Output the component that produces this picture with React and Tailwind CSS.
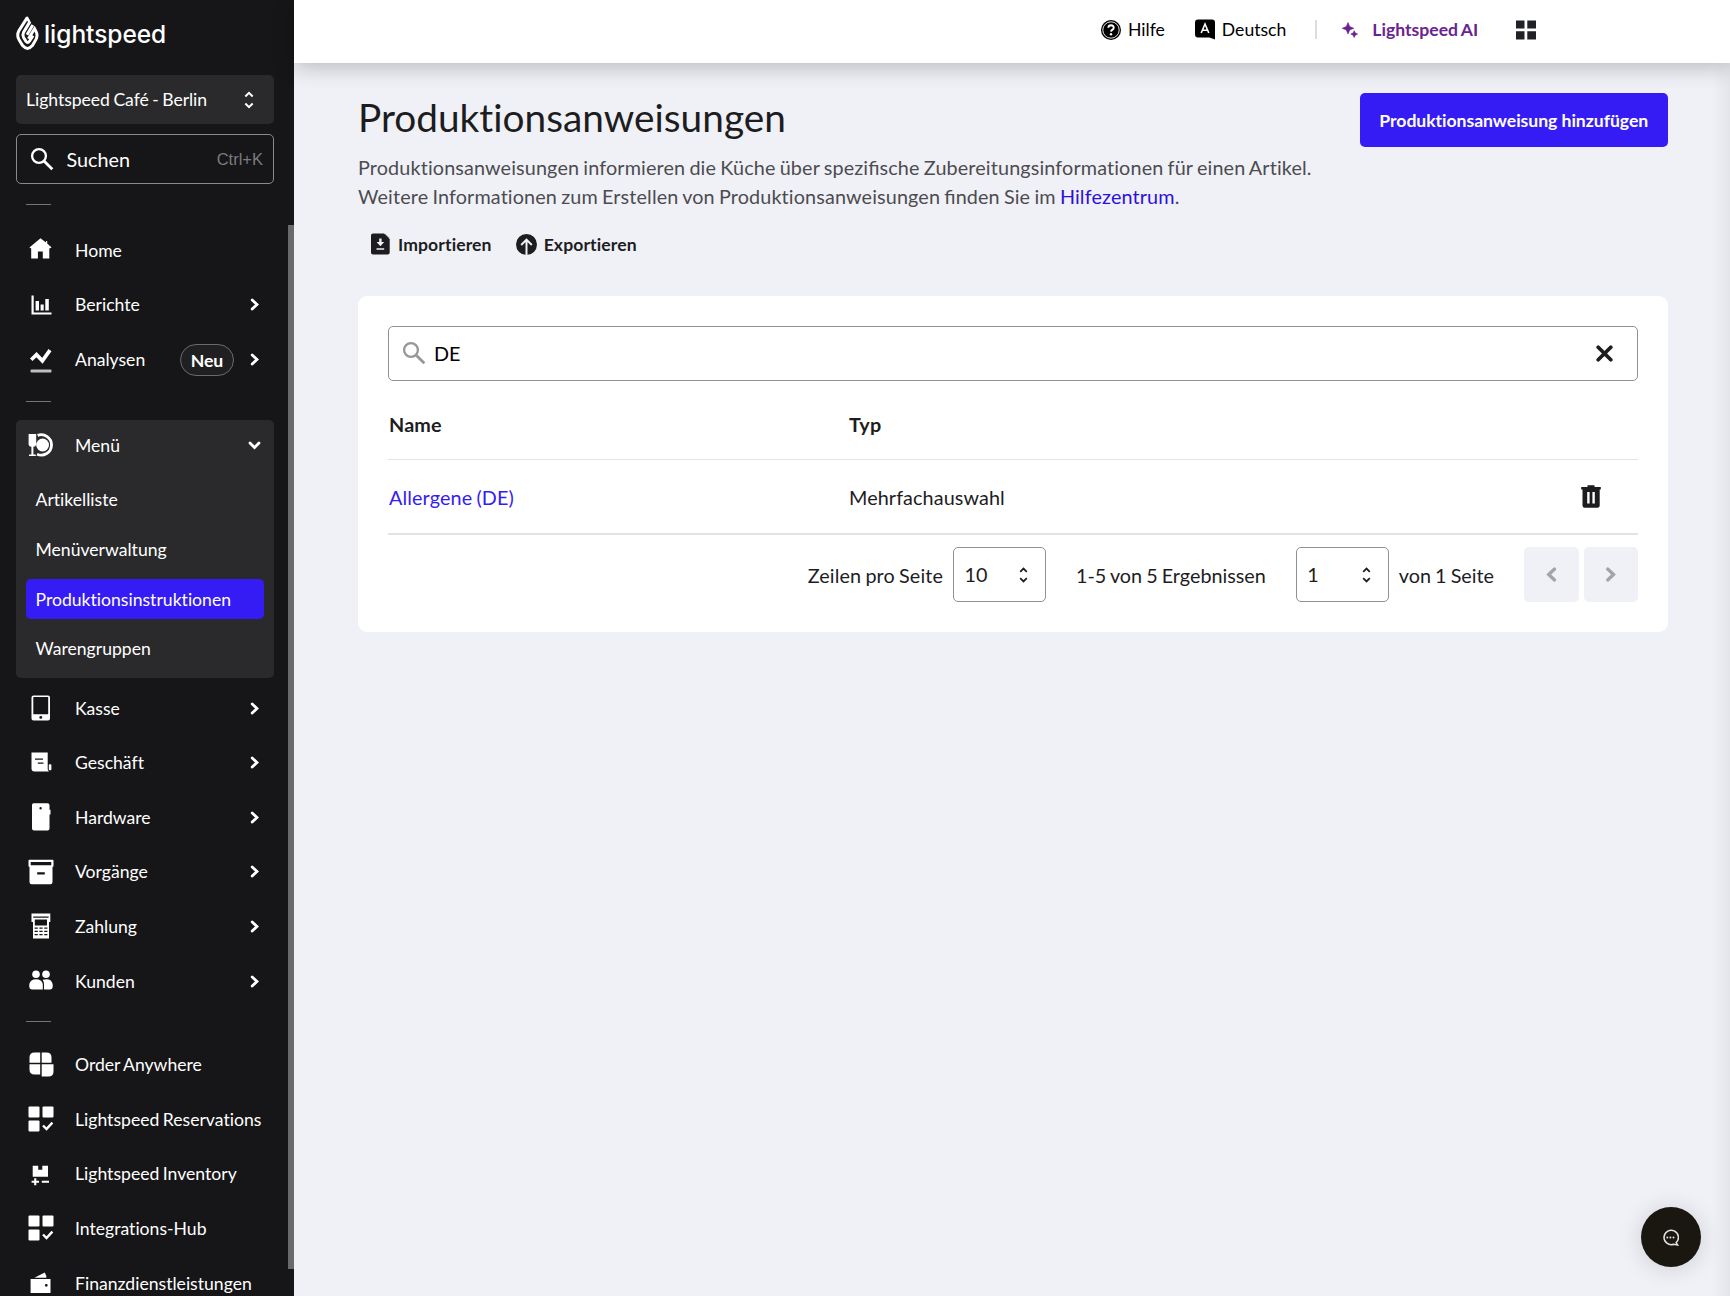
import React from "react";

function Icon({ w = 24, h = 24, box, className = "", children }) {
  return (
    <svg width={w} height={h} viewBox={box || `0 0 ${w} ${h}`} fill="currentColor" className={`block shrink-0 ${className}`}>
      {children}
    </svg>
  );
}

function Chevron({ dir = "right", className = "" }) {
  const paths = {
    right: "M2.2 2 L7 6.5 L2.2 11",
    left: "M7 2 L2.2 6.5 L7 11",
  };
  return (
    <Icon w={9} h={13} className={className}>
      <path d={paths[dir]} fill="none" stroke="currentColor" strokeWidth="2.8" strokeLinecap="round" strokeLinejoin="miter" />
    </Icon>
  );
}

function UpDown({ w = 9, h = 16 }) {
  return (
    <Icon w={w} h={h} box="0 0 9 16">
      <path d="M1.2 4.8 L4.5 1.6 L7.8 4.8 M1.2 11.2 L4.5 14.4 L7.8 11.2" fill="none" stroke="currentColor" strokeWidth="1.8" />
    </Icon>
  );
}

function SearchIcon({ className = "" }) {
  return (
    <Icon w={24} h={24} className={className}>
      <circle cx="9" cy="9" r="6.9" fill="none" stroke="currentColor" strokeWidth="2.3" />
      <path d="M14 14 L22.3 22.3" stroke="currentColor" strokeWidth="2.8" />
    </Icon>
  );
}

function AppsCheckIcon() {
  return (
    <Icon w={26} h={26}>
      <rect x="0.5" y="0.5" width="11" height="11" rx="1" />
      <rect x="14.5" y="0.5" width="11" height="11" rx="1" />
      <rect x="0.5" y="14.5" width="11" height="11" rx="1" />
      <path d="M15 19.5 L18.5 23 L24.4 16.6" fill="none" stroke="currentColor" strokeWidth="2.4" />
    </Icon>
  );
}

const icons = {
  home: (
    <Icon w={23} h={21} className="mb-[3px]">
      <path d="M11.5 0.3 L0.4 9.4 L2.2 10.4 V20.5 H8.9 V13.6 H13.8 V20.5 H20.3 V10.4 L22.6 9.4 L18.2 5.6 V3 H17 V4.5 Z" />
    </Icon>
  ),
  reports: (
    <Icon w={21} h={20} className="ml-[2px]">
      <path d="M0.5 0.5 H2.7 V17.5 H20.5 V19.6 H0.5 Z M4.6 6 H8 V15.5 H4.6 Z M9.6 9.5 H12.7 V15.5 H9.6 Z M14.3 4 H17.8 V15.5 H14.3 Z" />
    </Icon>
  ),
  analytics: (
    <Icon w={22} h={24} className="mt-[3px]">
      <path d="M1.2 10.8 L6.5 5.6 L12.4 11.8 L20 1.2" fill="none" stroke="currentColor" strokeWidth="3.7" />
      <rect x="0.5" y="20.6" width="21" height="3" rx="1" opacity="0.72" />
    </Icon>
  ),
  menu: (
    <Icon w={26} h={24}>
      <path d="M0.6 1 H8.2 V11 Q8.2 13.4 5.4 13.8 V21.5 H7.8 V23 H1 V21.5 H3.4 V13.8 Q0.6 13.4 0.6 11 Z" />
      <circle cx="14.6" cy="12" r="6.4" />
      <path d="M9.6 2.4 A10.2 10.2 0 1 1 9.1 21.2" fill="none" stroke="currentColor" strokeWidth="2.8" />
    </Icon>
  ),
  register: (
    <Icon w={20} h={26}>
      <path fillRule="evenodd" d="M2.5 0.5 H17 Q19 0.5 19 2.5 V23.5 Q19 25.5 17 25.5 H2.5 Q0.5 25.5 0.5 23.5 V2.5 Q0.5 0.5 2.5 0.5 Z M2.3 2 V19.3 H17.2 V2 Z M8.3 22.4 a1.5 1.3 0 1 0 3 0 a1.5 1.3 0 1 0 -3 0 Z" />
    </Icon>
  ),
  business: (
    <Icon w={21} h={20} className="mb-px ml-[2px]">
      <path fillRule="evenodd" d="M0.5 0.5 H16.7 V17 Q17 18.5 18 19.5 H3.5 Q0.5 19.5 0.5 16.5 Z M4 6.5 V7.8 H12 V6.5 Z M6.8 10.5 V11.8 H12.5 V10.5 Z" />
      <rect x="17.8" y="12.3" width="2.6" height="6" rx="0.8" />
    </Icon>
  ),
  hardware: (
    <Icon w={20} h={28}>
      <path fillRule="evenodd" d="M2.5 0.3 H16.5 Q18.5 0.3 18.5 2.3 V6.7 H19.5 V11.5 H18.5 V25.5 Q18.5 27.6 16.5 27.6 H3 Q1 27.6 1 25.6 V2 Q1 0.3 2.5 0.3 Z M8.4 5.3 a1.2 1.2 0 1 0 2.4 0 a1.2 1.2 0 1 0 -2.4 0 Z" />
    </Icon>
  ),
  operations: (
    <Icon w={26} h={26}>
      <path fillRule="evenodd" d="M1.5 0.7 H24.5 Q25.5 0.7 25.5 1.7 V6.5 Q25.5 8 24.5 8 V23 Q24.5 25.3 22.5 25.3 H3.5 Q1.5 25.3 1.5 23 V8 Q0.5 8 0.5 6.5 V1.7 Q0.5 0.7 1.5 0.7 Z M2.7 3 V6.3 H23.3 V3 Z M9.2 13.2 V15.5 H16.8 V13.2 Z" />
    </Icon>
  ),
  payment: (
    <Icon w={20} h={26}>
      <path fillRule="evenodd" d="M0.5 0.6 H19.3 V9 H18 V25.4 H2 V9 H0.5 Z M2.2 3.4 V4.7 H17.6 V3.4 Z M3.8 6.4 V12.4 H16 V6.4 Z" />
      <path d="M3.6 15.2 H16.4 M3.6 18.4 H16.4 M3.6 21.6 H16.4" stroke="#161618" strokeWidth="1.3" strokeDasharray="3.2 1.6" />
    </Icon>
  ),
  customers: (
    <Icon w={24} h={20} className="mb-[2px]">
      <circle cx="7" cy="4.2" r="3.8" />
      <circle cx="17" cy="4.2" r="3.8" />
      <path d="M0.3 17 V14 Q1.5 9.3 7 9.3 Q12.8 9.3 13.8 14 V19.5 H2.8 Q0.3 19.3 0.3 17 Z" />
      <path d="M13.6 9.8 Q22.5 7.5 23.7 14.5 V17 Q23.6 19.4 21.3 19.5 H15 V14 Q15 11.5 13.6 9.8 Z" />
    </Icon>
  ),
  order: (
    <Icon w={25} h={25} className="ml-px">
      <path d="M5.5 0.5 H11.2 V10.8 H0.5 V5.5 Q0.5 0.5 5.5 0.5 Z M12.7 0.5 H17.5 Q22.5 0.5 22.5 5.5 V10.8 H12.7 Z M0.5 12.3 H11.2 V22.5 H5.5 Q0.5 22.5 0.5 17.5 Z M12.7 12.3 H24.5 V19.5 Q24.5 24.5 19.5 24.5 H12.7 Z" />
    </Icon>
  ),
  apps: <AppsCheckIcon />,
  inventory: (
    <Icon w={19} h={21} className="mt-1">
      <path d="M1.7 0.7 H7.2 V4.7 H11.3 V0.7 H17 V11.8 H1.7 Z M3.2 13.2 H5.3 V15.7 H8 V17.8 H5.3 V20.3 H3.2 V17.8 H0.6 V15.7 H3.2 Z M10.8 15.7 H18 V17.8 H10.8 Z" />
    </Icon>
  ),
  wallet: (
    <Icon w={21} h={22}>
      <path fillRule="evenodd" d="M0.6 7 H20.5 V21 H0.6 Z M14.9 13.3 a1.4 1.4 0 1 0 2.8 0 a1.4 1.4 0 1 0 -2.8 0 Z" />
      <path d="M4.4 5.8 L14.8 0.5 L16.3 4 V5.8 Z" />
    </Icon>
  ),
};

const topItems = [
  { icon: "home", label: "Home" },
  { icon: "reports", label: "Berichte", arrow: true },
  { icon: "analytics", label: "Analysen", arrow: true, badge: "Neu" },
];

const subItems = ["Artikelliste", "Menüverwaltung", "Produktionsinstruktionen", "Warengruppen"];

const mainItems = [
  { icon: "register", label: "Kasse", arrow: true },
  { icon: "business", label: "Geschäft", arrow: true },
  { icon: "hardware", label: "Hardware", arrow: true },
  { icon: "operations", label: "Vorgänge", arrow: true },
  { icon: "payment", label: "Zahlung", arrow: true },
  { icon: "customers", label: "Kunden", arrow: true },
];

const extraItems = [
  { icon: "order", label: "Order Anywhere" },
  { icon: "apps", label: "Lightspeed Reservations" },
  { icon: "inventory", label: "Lightspeed Inventory" },
  { icon: "apps", label: "Integrations-Hub" },
  { icon: "wallet", label: "Finanzdienstleistungen" },
];

function NavItem({ icon, label, arrow, badge }) {
  return (
    <div className="flex h-[54.6px] shrink-0 items-center pl-[10.5px] pr-[15.5px]">
      <div className="flex w-[28px] shrink-0 justify-center">{icons[icon]}</div>
      <span className="ml-[20.5px] whitespace-nowrap pt-[1.5px]">{label}</span>
      <div className="ml-auto flex items-center gap-[15.5px]">
        {badge && (
          <span className="mt-[2px] flex h-[32px] w-[54px] items-center justify-center rounded-full border border-[#6a6a6c] bg-[#202022] pt-px font-bold">{badge}</span>
        )}
        {arrow && <Chevron />}
      </div>
    </div>
  );
}

function Divider({ className }) {
  return <div className={`ml-[10px] h-px w-[25px] shrink-0 bg-[#757577] ${className}`} />;
}

function Logo() {
  return (
    <div className="flex h-[35px] items-center">
      <svg width="23" height="35" viewBox="0 0 23 35" fill="none" stroke="white" strokeWidth="3">
        <path d="M11.4 1.4 L2.9 14.8 Q0.6 19.2 2.9 23.4 L6.6 29.6 Q11.5 35.2 16.4 29.6 L20 23.4 Q22 19.2 20 15.4 L18.6 12.8 L12.4 22.8" />
        <path d="M14 5.6 L7.6 16.2 Q6.3 19 7.6 21.6 L10 25.4 Q11.8 27.8 13.6 25 L17 19.6" />
        <path d="M16.8 9 L11 18.8" />
        <path d="M11.5 0 L14.6 5.5 L12.4 6.6 L10.6 4 Z" fill="white" stroke="none" />
      </svg>
      <span className="ml-[5px] pt-px font-['Inter',sans-serif] text-[24.5px] font-medium tracking-[-0.05px]">lightspeed</span>
    </div>
  );
}

function Sidebar() {
  return (
    <aside className="flex h-full w-[294px] shrink-0 bg-[#161618] text-[17.6px] text-white">
      <div className="flex w-[274px] flex-col overflow-hidden pl-4 pt-4">
        <Logo />
        <div className="mt-6 flex h-[49px] shrink-0 items-center justify-between rounded-[5px] bg-[#2a2a2c] pl-[10px] pr-[20px]">
          <span className="pt-[2px] tracking-[-0.04px]">Lightspeed Café - Berlin</span>
          <UpDown w={10} h={20} />
        </div>
        <div className="mt-[10px] flex h-[50px] shrink-0 items-center rounded-[5px] border border-[#8a8a8c] pl-[13px] pr-[10px]">
          <SearchIcon />
          <span className="ml-[12.5px] pt-px text-[19.8px]">Suchen</span>
          <span className="ml-auto font-['Liberation_Sans',sans-serif] text-[16.5px] text-[#7b7b7d]">Ctrl+K</span>
        </div>
        <Divider className="mt-5" />
        <div className="mt-[18px] flex flex-col">
          {topItems.map((item) => (
            <NavItem key={item.label} {...item} />
          ))}
        </div>
        <Divider className="mt-[14px]" />
        <div className="mt-[18px] flex h-[258px] shrink-0 flex-col rounded-[5px] bg-[#2a2a2c]">
          <div className="flex h-[51px] items-center pl-[10.5px] pr-[13.5px]">
            <div className="flex w-[28px] justify-center">{icons.menu}</div>
            <span className="ml-[20.5px] pt-px">Menü</span>
            <Icon w={13} h={9} className="ml-auto">
              <path d="M2 2 L6.5 6.6 L11 2" fill="none" stroke="currentColor" strokeWidth="2.8" strokeLinecap="round" />
            </Icon>
          </div>
          <div className="mt-[8.5px] flex flex-col gap-[9.8px] px-[10px]">
            {subItems.map((label) => (
              <div key={label} className={`flex h-10 items-center rounded-[5px] pl-[9.5px] pt-[2px] ${label === "Produktionsinstruktionen" ? "bg-[#351cf5]" : ""}`}>
                {label}
              </div>
            ))}
          </div>
        </div>
        <div className="mt-[3px] flex flex-col">
          {mainItems.map((item) => (
            <NavItem key={item.label} {...item} />
          ))}
        </div>
        <Divider className="mt-[12.5px]" />
        <div className="mt-[15.5px] flex flex-col">
          {extraItems.map((item) => (
            <NavItem key={item.label} {...item} />
          ))}
        </div>
      </div>
      <div className="ml-auto mt-[225px] h-[1044px] w-[6px] bg-[#6a6a6a]" />
    </aside>
  );
}

function Header() {
  return (
    <header className="relative z-10 flex h-[63px] shrink-0 items-center bg-white pb-[4px] pl-[807px] text-[17.6px] text-black shadow-[0_4px_22px_rgba(0,0,0,0.24)]">
      <Icon w={20} h={20}>
        <circle cx="10" cy="10" r="10" />
        <circle cx="10" cy="10" r="8.2" fill="none" stroke="white" strokeWidth="0.9" />
        <path d="M7.3 7.8 Q7.4 5.3 10 5.3 Q12.8 5.4 12.7 7.8 Q12.6 9 11.2 9.9 Q10.1 10.6 10 11.7" fill="none" stroke="white" strokeWidth="1.9" />
        <circle cx="10" cy="14.3" r="1.2" fill="white" />
      </Icon>
      <span className="ml-[7px] pt-[2px]">Hilfe</span>
      <Icon w={20} h={21} className="ml-[30px]">
        <path d="M3 0.5 H17 Q20 0.5 20 3.5 V20.5 L14.5 18.5 H3 Q0 18.5 0 15.5 V3.5 Q0 0.5 3 0.5 Z" />
        <path d="M6.2 14 L10 5 L13.8 14 M7.5 11.3 H12.5" fill="none" stroke="white" strokeWidth="1.6" />
      </Icon>
      <span className="ml-[7px] pt-[2px]">Deutsch</span>
      <div className="ml-[29px] h-[19px] w-[2px] bg-[#dcdde2]" />
      <Icon w={16} h={16} className="ml-[25px] text-[#6b2291]">
        <path d="M6 0.5 L7.7 4.6 L11.8 6.3 L7.7 8 L6 12.1 L4.3 8 L0.2 6.3 L4.3 4.6 Z" stroke="currentColor" strokeWidth="0.6" />
        <path d="M12.2 8.7 L13.3 11 L15.6 12.1 L13.3 13.2 L12.2 15.5 L11.1 13.2 L8.8 12.1 L11.1 11 Z" stroke="currentColor" strokeWidth="0.6" />
      </Icon>
      <span className="ml-[14px] pt-[2px] font-bold text-[#6b2291]">Lightspeed AI</span>
      <Icon w={20} h={20} className="ml-[38px] text-[#212228]">
        <path d="M0 0.5 H8.5 V8.5 H0 Z M11.3 0.5 H20 V8.5 H11.3 Z M0 11.3 H8.5 V19.5 H0 Z M11.3 11.3 H20 V19.5 H11.3 Z" />
      </Icon>
    </header>
  );
}

function Select({ value }) {
  return (
    <div className="flex h-[55px] w-[93px] items-center justify-between rounded-[5px] border border-[#919194] pl-[10.5px] pr-[17px]">
      <span>{value}</span>
      <UpDown />
    </div>
  );
}

function TableCard() {
  return (
    <section className="mt-[38px] h-[336px] rounded-[9px] bg-white px-[30px] pt-[30px] text-[19.8px] text-[#1d1d1f]">
      <div className="flex h-[54.5px] items-center rounded-[5px] border border-[#919194] pl-[13px] pr-[24px]">
        <SearchIcon className="text-[#97979b]" />
        <span className="ml-[8px] pt-px text-black">DE</span>
        <Icon w={17} h={17} className="ml-auto">
          <path d="M2.2 2.2 L14.8 14.8 M14.8 2.2 L2.2 14.8" stroke="currentColor" strokeWidth="3.7" strokeLinecap="round" />
        </Icon>
      </div>
      <div className="mt-[9.5px] flex h-[70px] items-center border-b border-[#e2e2e8] font-bold">
        <span className="w-[461px] pl-px tracking-[0.15px]">Name</span>
        <span className="tracking-[0.15px]">Typ</span>
      </div>
      <div className="flex h-[75px] items-center border-b-2 border-[#e2e2e8]">
        <span className="w-[461px] pl-px pt-[2px] tracking-[0.12px] text-[#351cf5]">Allergene (DE)</span>
        <span className="pt-[2px] tracking-[0.1px]">Mehrfachauswahl</span>
        <Icon w={20} h={23} className="ml-auto mr-[37.5px]">
          <path fillRule="evenodd" d="M6.5 0.3 H13.5 V2 H19.8 V4.5 H18.7 V20.5 Q18.7 22.8 16.4 22.8 H3.8 Q1.5 22.8 1.5 20.5 V4.5 H0.2 V2 H6.5 Z M6.2 7 V18.5 H8.6 V7 Z M11.4 7 V18.5 H13.8 V7 Z" />
        </Icon>
      </div>
      <div className="mt-[12px] flex h-[55px] items-center justify-end">
        <span className="pt-[2px] tracking-[0.12px]">Zeilen pro Seite</span>
        <div className="ml-[10px] mr-[30px]"><Select value="10" /></div>
        <span className="pt-[2px]">1-5 von 5 Ergebnissen</span>
        <div className="ml-[30px] mr-[10px]"><Select value="1" /></div>
        <span className="pt-[2px]">von 1 Seite</span>
        <div className="ml-[30px] flex gap-[5px] text-[#a3a3a8]">
          <div className="flex h-[54.5px] w-[54.5px] items-center justify-center rounded-[5px] bg-[#f0f1f6]"><Chevron dir="left" className="scale-[1.2]" /></div>
          <div className="flex h-[54.5px] w-[54.5px] items-center justify-center rounded-[5px] bg-[#f0f1f6]"><Chevron className="scale-[1.2]" /></div>
        </div>
      </div>
    </section>
  );
}

// "fi" is the only pair set as a ligature
function Fi() {
  return <span className="[font-variant-ligatures:common-ligatures] tracking-normal">fi</span>;
}

export default function App() {
  return (
    <div className="flex h-screen w-full overflow-hidden bg-[#f0f1f6] font-['Lato',sans-serif] [font-variant-ligatures:none] [word-spacing:-1px]">
      <Sidebar />
      <div className="flex min-w-0 flex-1 flex-col">
        <Header />
        <main className="relative flex-1 pl-16 pr-[62px] pt-[29px]">
          <div className="flex items-start justify-between">
            <h1 className="h-[60px] text-[38.8px] leading-[50px] text-[#1d1d1f]">Produktionsanweisungen</h1>
            <button className="mt-[0.6px] h-[54.5px] w-[308.5px] rounded-[5px] bg-[#351cf5] pt-[2px] text-[17.6px] font-bold tracking-[-0.04px] text-white">Produktionsanweisung hinzufügen</button>
          </div>
          <p className="mt-px text-[19.8px] leading-[29px] tracking-[0.135px] text-[#4c4c50]">
            Produktionsanweisungen informieren die Küche über spezi<Fi />sche Zubereitungsinformationen für einen Artikel.
            <br />
            Weitere Informationen zum Erstellen von Produktionsanweisungen <Fi />nden Sie im <a className="text-[#2d10dd]">Hilfezentrum</a>.
          </p>
          <div className="mt-[21px] flex h-[26px] items-center pl-[13px] text-[17.6px] font-bold text-[#1d1d1f]">
            <Icon w={19} h={22} className="mb-[2px]">
              <path fillRule="evenodd" d="M2 0.5 H13 L18.7 6 V19.5 Q18.7 21.5 16.7 21.5 H2 Q0 21.5 0 19.5 V2.5 Q0 0.5 2 0.5 Z M8.2 5.5 V9 H5.6 L9.4 13.3 L13.2 9 H10.6 V5.5 Z M5.5 15.3 V16.7 H13.2 V15.3 Z" />
              <path d="M14 0.5 L18.7 5 H14 Z" opacity="0.4" />
            </Icon>
            <span className="ml-2 pt-px tracking-[0.1px]">Importieren</span>
            <Icon w={21} h={21} className="mb-[2px] ml-[24px]">
              <circle cx="10.5" cy="10.5" r="10.5" />
              <path d="M10.5 21 V7 M5.2 11 L10.5 5.6 L15.8 11" fill="none" stroke="#f0f1f6" strokeWidth="2" />
            </Icon>
            <span className="ml-[7px] pt-px tracking-[0.1px]">Exportieren</span>
          </div>
          <TableCard />
          <div className="absolute inset-y-0 right-0 w-[18px] bg-gradient-to-r from-transparent to-black/5" />
          <div className="absolute bottom-[29px] right-[29px] flex h-[60px] w-[60px] items-center justify-center rounded-full bg-[#1a1610] pr-px text-[#e4e2df] shadow-[0_2px_24px_rgba(0,0,0,0.14)]">
            <Icon w={17} h={17}>
              <path d="M14.2 13.6 A7.2 7.2 0 1 0 11.6 15.2 L15.6 16 Z" fill="none" stroke="currentColor" strokeWidth="1.5" />
              <circle cx="5.3" cy="8.6" r="1" />
              <circle cx="8.4" cy="8.6" r="1" />
              <circle cx="11.5" cy="8.6" r="1" />
            </Icon>
          </div>
        </main>
      </div>
    </div>
  );
}
